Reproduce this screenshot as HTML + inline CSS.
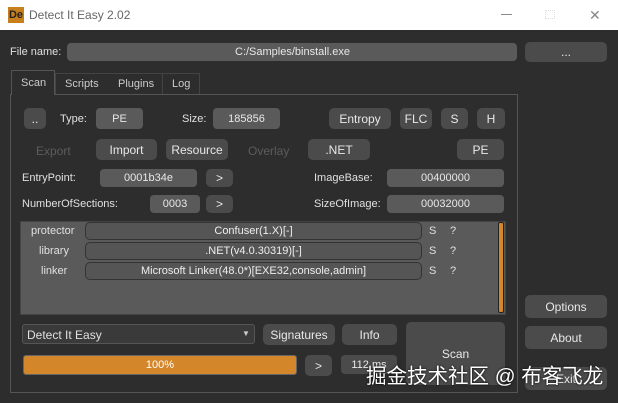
<!DOCTYPE html>
<html><head><meta charset="utf-8"><style>
*{margin:0;padding:0;box-sizing:border-box}
body{width:618px;height:403px;background:#2d2d2d;font-family:"Liberation Sans","Noto Sans CJK SC",sans-serif;font-size:11px;color:#e0e0e0;position:relative;overflow:hidden}
.a{position:absolute}
.t{position:absolute;white-space:nowrap;line-height:1}
.b{position:absolute;background:#4b4b4b;border-radius:5px;display:flex;align-items:center;justify-content:center;color:#e8e8e8;font-size:12px}
.f{position:absolute;background:#5a5a5a;border-radius:4px;display:flex;align-items:center;justify-content:center;color:#e8e8e8;font-size:11px}
.d{color:#5c5c5c}
.r{position:absolute;left:85px;width:337px;height:18px;border:1px solid #333;border-radius:5px;background:#555;display:flex;align-items:center;justify-content:center;font-size:11px;color:#eee}
</style></head><body>
<div class="a" style="left:0;top:0;width:618px;height:30px;background:#fff"></div>
<div class="a" style="left:8px;top:7px;width:16px;height:16px;background:#c8801c;color:#222;font-size:11px;font-weight:bold;line-height:16px;text-align:center">De</div>
<div class="t" style="left:29px;top:9px;color:#666;font-size:12px">Detect It Easy 2.02</div>
<div class="a" style="left:501px;top:14px;width:11px;height:1px;background:#888"></div>
<div class="a" style="left:545px;top:10px;width:10px;height:9px;border:1px dotted #ddd"></div>
<div class="t" style="left:589px;top:8px;color:#888;font-size:14px">✕</div>

<div class="t" style="left:10px;top:47px;font-size:11px">File name:</div>
<div class="f" style="left:67px;top:43px;width:450px;height:18px;justify-content:flex-start;padding-left:168px">C:/Samples/binstall.exe</div>
<div class="b" style="left:525px;top:42px;width:82px;height:20px">...</div>

<div class="a" style="left:11px;top:70px;width:44px;height:25px;border:1px solid #555;border-bottom:none;background:#2d2d2d;z-index:2"></div>
<div class="t" style="left:21px;top:78px;z-index:3;color:#ccc">Scan</div>
<div class="a" style="left:55px;top:73px;width:145px;height:21px;border:1px solid #444;border-bottom:none"></div>
<div class="t" style="left:65px;top:79px;color:#ccc">Scripts</div>
<div class="t" style="left:118px;top:79px;color:#ccc">Plugins</div>
<div class="a" style="left:162px;top:73px;width:1px;height:21px;background:#444"></div>
<div class="t" style="left:172px;top:79px;color:#ccc">Log</div>
<div class="a" style="left:10px;top:94px;width:508px;height:299px;border:1px solid #555"></div>

<div class="b" style="left:24px;top:108px;width:22px;height:21px">..</div>
<div class="t" style="left:60px;top:114px">Type:</div>
<div class="f" style="left:96px;top:108px;width:47px;height:21px">PE</div>
<div class="t" style="left:182px;top:114px">Size:</div>
<div class="f" style="left:213px;top:108px;width:67px;height:21px">185856</div>
<div class="b" style="left:329px;top:108px;width:62px;height:21px">Entropy</div>
<div class="b" style="left:400px;top:108px;width:32px;height:21px">FLC</div>
<div class="b" style="left:441px;top:108px;width:27px;height:21px">S</div>
<div class="b" style="left:477px;top:108px;width:28px;height:21px">H</div>

<div class="t d" style="left:36px;top:145px;font-size:12px">Export</div>
<div class="b" style="left:96px;top:139px;width:61px;height:21px">Import</div>
<div class="b" style="left:166px;top:139px;width:62px;height:21px">Resource</div>
<div class="t d" style="left:248px;top:145px;font-size:12px">Overlay</div>
<div class="b" style="left:308px;top:139px;width:62px;height:21px">.NET</div>
<div class="b" style="left:457px;top:139px;width:47px;height:21px">PE</div>

<div class="t" style="left:22px;top:173px">EntryPoint:</div>
<div class="f" style="left:100px;top:169px;width:97px;height:18px">0001b34e</div>
<div class="b" style="left:206px;top:169px;width:27px;height:18px">&gt;</div>
<div class="t" style="left:314px;top:173px">ImageBase:</div>
<div class="f" style="left:387px;top:169px;width:117px;height:18px">00400000</div>
<div class="t" style="left:22px;top:199px">NumberOfSections:</div>
<div class="f" style="left:150px;top:195px;width:50px;height:18px">0003</div>
<div class="b" style="left:206px;top:195px;width:27px;height:18px">&gt;</div>
<div class="t" style="left:314px;top:199px">SizeOfImage:</div>
<div class="f" style="left:387px;top:195px;width:117px;height:18px">00032000</div>

<div class="a" style="left:20px;top:221px;width:486px;height:94px;background:#5a5a5a;border:1px solid #444"></div>
<div class="t" style="left:31px;top:226px">protector</div>
<div class="t" style="left:39px;top:246px">library</div>
<div class="t" style="left:41px;top:266px">linker</div>
<div class="r" style="top:222px">Confuser(1.X)[-]</div>
<div class="r" style="top:242px">.NET(v4.0.30319)[-]</div>
<div class="r" style="top:262px">Microsoft Linker(48.0*)[EXE32,console,admin]</div>
<div class="t" style="left:429px;top:226px">S</div><div class="t" style="left:450px;top:226px">?</div>
<div class="t" style="left:429px;top:246px">S</div><div class="t" style="left:450px;top:246px">?</div>
<div class="t" style="left:429px;top:266px">S</div><div class="t" style="left:450px;top:266px">?</div>
<div class="a" style="left:498px;top:222px;width:6px;height:91px;background:#d4862a;border:1px solid #222;border-radius:2px"></div>

<div class="a" style="left:22px;top:324px;width:233px;height:20px;background:#3a3a3a;border:1px solid #555;border-radius:3px"></div>
<div class="t" style="left:27px;top:329px;font-size:12px">Detect It Easy</div>
<div class="t" style="left:242px;top:330px;font-size:8px;color:#ccc">▼</div>
<div class="b" style="left:263px;top:324px;width:72px;height:21px">Signatures</div>
<div class="b" style="left:342px;top:324px;width:55px;height:21px">Info</div>
<div class="b" style="left:406px;top:322px;width:99px;height:63px">Scan</div>
<div class="a" style="left:23px;top:355px;width:274px;height:20px;background:#d4862a;border:1px solid #666;border-radius:3px;text-align:center;line-height:18px;font-size:11px;color:#fff">100%</div>
<div class="b" style="left:305px;top:355px;width:27px;height:21px">&gt;</div>
<div class="f" style="left:341px;top:355px;width:56px;height:19px;background:#4b4b4b">112 ms</div>

<div class="b" style="left:525px;top:295px;width:82px;height:23px">Options</div>
<div class="b" style="left:525px;top:326px;width:82px;height:23px">About</div>
<div class="b" style="left:525px;top:367px;width:82px;height:23px">Exit</div>
<div class="t" style="left:366px;top:367px;font-size:20.5px;color:#fff;text-shadow:0 0 2px #000">掘金技术社区 @ 布客飞龙</div>
</body></html>
